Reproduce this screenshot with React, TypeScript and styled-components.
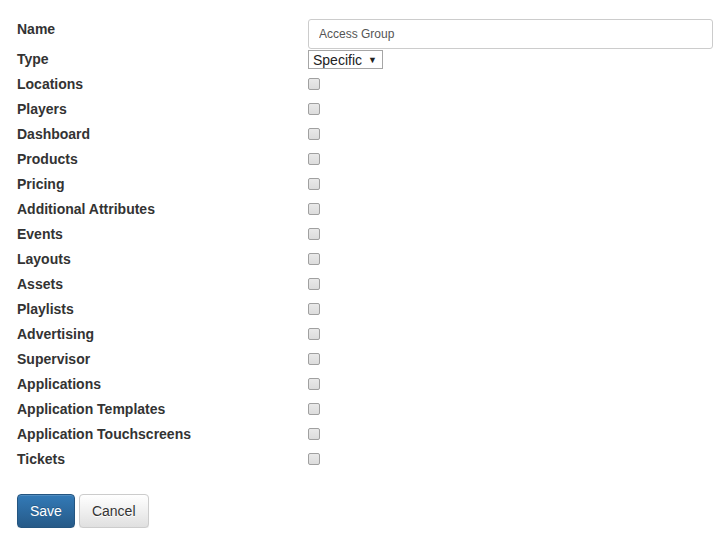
import { Fragment } from "react";
import styled, { createGlobalStyle } from "styled-components";

const GlobalStyle = createGlobalStyle`
  html, body {
    margin: 0;
    padding: 0;
    background: #fff;
  }
  body {
    font-family: "Liberation Sans", Arial, sans-serif;
    font-size: 14px;
    color: #333;
  }
`;

const modules = [
  "Locations",
  "Players",
  "Dashboard",
  "Products",
  "Pricing",
  "Additional Attributes",
  "Events",
  "Layouts",
  "Assets",
  "Playlists",
  "Advertising",
  "Supervisor",
  "Applications",
  "Application Templates",
  "Application Touchscreens",
  "Tickets",
];

const Page = styled.form`
  padding: 19px 12px 0 17px;
`;

const Fields = styled.div`
  display: grid;
  grid-template-columns: 291px 1fr;
`;

const Label = styled.label<{ $height: number }>`
  height: ${({ $height }) => $height}px;
  font-weight: bold;
  line-height: 20px;
`;

const Cell = styled.div<{ $height: number }>`
  height: ${({ $height }) => $height}px;
  display: flex;
  align-items: flex-start;
`;

const TextInput = styled.input`
  box-sizing: border-box;
  width: 100%;
  height: 30px;
  padding: 0 10px;
  border: 1px solid #ccc;
  border-radius: 3px;
  font-family: "Liberation Sans", Arial, sans-serif;
  font-size: 12px;
  color: #555;
  outline: none;
`;

const SelectBox = styled.div`
  box-sizing: border-box;
  display: flex;
  align-items: center;
  height: 19px;
  margin-top: 1px;
  border: 1px solid #a6a6a6;
  background: #fff;
  padding: 0 5px 0 4px;
`;

const Select = styled.select`
  appearance: none;
  border: none;
  background: transparent;
  padding: 0;
  margin: 0;
  font-family: "Liberation Sans", Arial, sans-serif;
  font-size: 14px;
  color: #222;
  outline: none;
`;

const Caret = styled.span`
  font-size: 9px;
  margin-left: 5px;
  color: #222;
`;

const Checkbox = styled.input`
  appearance: none;
  box-sizing: border-box;
  width: 12px;
  height: 12px;
  margin: 4px 0 0 0;
  border: 1px solid #a0a0a0;
  border-radius: 2px;
  background: linear-gradient(to bottom, #e9e9e9, #dcdcdc);
`;

const Actions = styled.div`
  display: flex;
  gap: 4px;
  margin-top: 20px;
`;

const Button = styled.button<{ $primary?: boolean }>`
  box-sizing: border-box;
  height: 34px;
  padding: 6px 12px;
  border-radius: 4px;
  font-family: "Liberation Sans", Arial, sans-serif;
  font-size: 14px;
  line-height: 20px;
  cursor: pointer;
  border: 1px solid ${({ $primary }) => ($primary ? "#245580" : "#ccc")};
  color: ${({ $primary }) => ($primary ? "#fff" : "#333")};
  background-image: ${({ $primary }) =>
    $primary
      ? "linear-gradient(to bottom, #337ab7 0, #265a88 100%)"
      : "linear-gradient(to bottom, #fff 0, #e0e0e0 100%)"};
  text-shadow: ${({ $primary }) => ($primary ? "0 -1px 0 rgba(0,0,0,.2)" : "0 1px 0 #fff")};
  box-shadow: inset 0 1px 0 rgba(255, 255, 255, 0.15), 0 1px 1px rgba(0, 0, 0, 0.075);
`;

export default function App() {
  return (
    <>
      <GlobalStyle />
      <Page onSubmit={e => e.preventDefault()}>
        <Fields>
          <Label $height={30}>Name</Label>
          <Cell $height={30}>
            <TextInput defaultValue="Access Group" />
          </Cell>

          <Label $height={25}>Type</Label>
          <Cell $height={25}>
            <SelectBox>
              <Select defaultValue="specific">
                <option value="specific">Specific</option>
                <option value="all">All</option>
              </Select>
              <Caret>▼</Caret>
            </SelectBox>
          </Cell>

          {modules.map(name => (
            <Fragment key={name}>
              <Label $height={25}>{name}</Label>
              <Cell $height={25}>
                <Checkbox type="checkbox" />
              </Cell>
            </Fragment>
          ))}
        </Fields>
        <Actions>
          <Button $primary type="submit">
            Save
          </Button>
          <Button type="button">Cancel</Button>
        </Actions>
      </Page>
    </>
  );
}
